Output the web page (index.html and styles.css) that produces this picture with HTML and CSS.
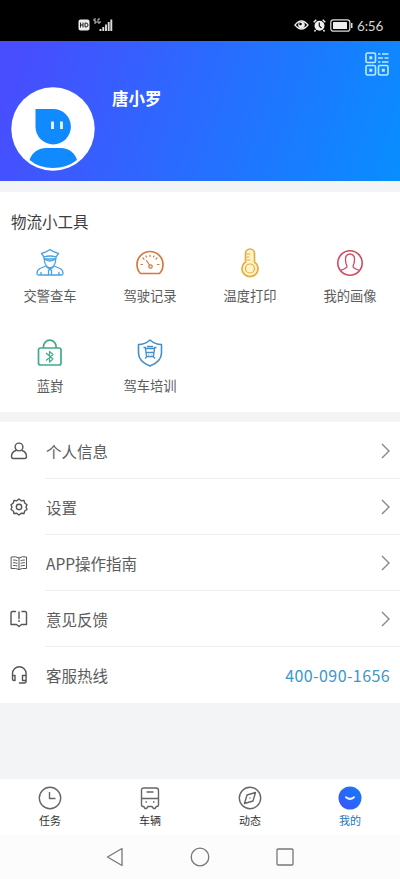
FILE: index.html
```html
<!DOCTYPE html>
<html lang="zh-CN">
<head>
<meta charset="utf-8">
<meta name="viewport" content="width=device-width">
<title>我的</title>
<link rel="stylesheet" href="styles.css">
</head>
<body>
<header class="status">
  <div class="status-left">
    <svg width="12" height="12" viewBox="0 0 12 12"><rect x=".5" y=".5" width="11" height="11" rx="2" fill="#eee"/><path d="M2.500 3.500v5M5 3.500v5M2.500 6H5M7 4h1q2 0 2 2t-2 2H7z" stroke="#222" fill="none"/></svg>
    <svg width="20" height="14" viewBox="0 0 20 14"><path d="M3 1H1v2h2v2H1M7 1H5v4h2V3" stroke="#ddd" stroke-width=".9" fill="none"/><path d="M7.500 11v2M10.300 9v4M13 6.500V13M15.700 4v9M18.300 1.500V13" stroke="#ddd" stroke-width="1.900"/></svg>
  </div>
  <div class="status-right">
    <svg width="15" height="12" viewBox="0 0 15 12"><path d="M1 6Q7.500-2 14 6Q7.500 14 1 6z" fill="none" stroke="#eee" stroke-width="1.300"/><circle cx="7.500" cy="6" r="3.300" fill="#eee"/><circle cx="6.500" cy="5" r="1.300" fill="#000"/></svg>
    <svg width="13" height="13" viewBox="0 0 13 13"><circle cx="6.500" cy="6.700" r="5" fill="#eee"/><path d="M.7 3.300 3.300.8M9.700.8l2.600 2.500M2.500 11l-1 1.500M10.500 11l1 1.500" stroke="#eee" stroke-width="1.400"/><path d="M6.300 3.500V7l2.200 2" fill="none" stroke="#111" stroke-width="1.200"/></svg>
    <svg width="23" height="13" viewBox="0 0 23 13"><rect x=".8" y=".8" width="19" height="11.400" rx="2.500" fill="none" stroke="#ddd" stroke-width="1.200"/><rect x="3" y="3" width="14" height="7" rx=".5" fill="#eee"/><path d="M21.700 4v5" stroke="#ddd" stroke-width="1.600"/></svg>
    <span class="time">6:56</span>
  </div>
</header>

<section class="profile">
  <svg class="avatar" viewBox="0 0 84 84"><circle cx="42" cy="42" r="41.700" fill="#fff"/><path d="M24.500 22H42a17.700 17.700 0 1 1-17.500 17.700z" fill="#118aff"/><path d="M18.500 73C21 65 28 61 35 61h15c8 0 14 5 16 12q-10 8-24 8t-23.500-8z" fill="#118aff"/><path d="M41.500 34.500v7.500M50.500 34.500v7.500" stroke="#e8faff" stroke-width="2.800"/></svg>
  <h1 class="name">唐小罗</h1>
  <svg class="qr" viewBox="0 0 24 24" fill="none" stroke="#b8edff" stroke-width="1.600"><rect x="1" y="1" width="9.500" height="9.500" rx="1.500"/><rect x="1" y="13.500" width="9.500" height="9.500" rx="1.500"/><rect x="13.500" y="13.500" width="9.500" height="9.500" rx="1.500"/><path d="M4.300 5.700h3M4.300 18.200h3M16.800 18.200h3" stroke-width="3"/><path d="M13 2h2.500M17 2h6.500M13 6h5M19.500 6h4M13 10h2.500M17 10h6.500"/></svg>
</section>

<section class="tools">
  <h2 class="tools-title">物流小工具</h2>
  <div class="tools-grid">
    <div class="tool">
      <svg class="tool-icon" viewBox="0 0 30 30" fill="none" stroke="#4aa3dc" stroke-width="1.300" stroke-linejoin="round"><path d="M9 9 6.500 5.500Q12 4 15 1.500q3 2.500 8.500 4L21 9v2H9zM9 9q6-2 12 0M9.500 11v2.500q1 5.500 5.500 6.500 4.500-1 5.500-6.500V11q-5.500 4-11 0M11 18l-6 2.500Q2 22 2 25.500 2 27 3.500 27h23q1.500 0 1.500-1.500 0-3.500-3-5L19 18M11 18l4 4 4-4M13.500 22v5M16.500 22v5M6 24v3M24 24v3"/></svg>
      <span>交警查车</span>
    </div>
    <div class="tool">
      <svg class="tool-icon" viewBox="0 0 30 30" fill="none" stroke="#d9763f" stroke-width="1.700" stroke-linecap="round" stroke-linejoin="round"><path d="M5.500 25.500Q2 22 2 16.500a13 13 0 0 1 26 0q0 5.500-3.500 9z"/><path d="M6 16.500h1.500M22.500 16.500H24M8 10l1 1M15 7v1.500M22 10l-1 1M11 8l.5 1M19 8l-.5 1M11.500 12.500l3 4.500" stroke-width="1.200"/><circle cx="15.500" cy="18.500" r="1.700" stroke-width="1.300"/></svg>
      <span>驾驶记录</span>
    </div>
    <div class="tool">
      <svg class="tool-icon" viewBox="0 0 30 30" fill="#fff3c9" stroke="#e4ae46" stroke-width="1.700" stroke-linecap="round"><path d="M10.500 14V5.500a4.500 4.500 0 0 1 9 0V14a8 8 0 1 1-9 0z"/><circle cx="15" cy="20.500" r="4.500" stroke-width="1.200"/><path d="M12 6h3M12 9h2M12 12h3" stroke-width="1.100"/></svg>
      <span>温度打印</span>
    </div>
    <div class="tool">
      <svg class="tool-icon" viewBox="0 0 30 30" fill="none" stroke="#cf4b61" stroke-width="1.600"><circle cx="15" cy="15" r="12.200"/><path d="M5 22.500q5-1.500 6.500-3 1-1-.5-4Q9 6 15 6t4 9.500q-1.500 3-.5 4 1.500 1.500 6.500 3" stroke-width="1.300"/></svg>
      <span>我的画像</span>
    </div>
    <div class="tool">
      <svg class="tool-icon" viewBox="0 0 30 30" fill="none" stroke="#42aa8b" stroke-width="1.700" stroke-linejoin="round"><rect x="3.500" y="10" width="22.500" height="17" rx="2"/><path d="M8.500 10V8.500a6.300 6.300 0 0 1 12.600 0V10"/><path d="m11 15 7 6-3.500 3V13.500l3.500 3-7 6" stroke-width="1.200"/></svg>
      <span>蓝崶</span>
    </div>
    <div class="tool">
      <svg class="tool-icon" viewBox="0 0 30 30" fill="none" stroke="#438fca" stroke-width="1.600" stroke-linejoin="round"><path d="M15 2q5 4.500 11.500 4.500V15q0 8.500-11.500 13Q3.500 23.500 3.500 15V6.500Q10 6.500 15 2z"/><path d="M10.500 10.500h9l-1 8h-7zM10.500 14.500h9M12 8.500h6M8.500 9.500h2v3M21.500 9.500h-2v3M12 18.500l-2 2M18 18.500l2 2M13 16.700h.5M16.700 16.700h.5" stroke-width="1.300"/></svg>
      <span>驾车培训</span>
    </div>
  </div>
</section>

<main class="menu">
  <div class="row">
    <svg class="row-icon" viewBox="0 0 18 18"><circle cx="9" cy="5" r="3.900"/><path d="M6 8.500Q1.500 10 1.500 14.500q0 2 2 2h11q2 0 2-2 0-4.500-4.500-6"/></svg>
    <div class="row-body"><span>个人信息</span><svg class="chevron" viewBox="0 0 9 16"><path d="m1 1 7 7-7 7"/></svg></div>
  </div>
  <div class="row">
    <svg class="row-icon" viewBox="0 0 18 18"><path d="m9 1 2.200 1.700 2.800-.3.700 2.600L17 6.700 16 9l1 2.500-2.300 1.500-.7 2.500-2.800-.2L9 17l-2.200-1.700-2.800.2-.7-2.500L1 11.500 2 9 1 6.700 3.300 5 4 2.400l2.800.3z"/><circle cx="9" cy="9" r="2.700"/></svg>
    <div class="row-body"><span>设置</span><svg class="chevron" viewBox="0 0 9 16"><path d="m1 1 7 7-7 7"/></svg></div>
  </div>
  <div class="row">
    <svg class="row-icon thin" viewBox="0 0 18 18"><path d="M1.500 3Q6 2 9 4q3-2 7.500-1v11.500Q12 14 9 15.500 6 14 1.500 14.500zM9 4v11M3.500 6q2 0 3.500.5M3.500 8.700q2 0 3.500.5M3.500 11.400q2 0 3.500.5M14.500 6q-2 0-3.500.5M14.500 8.700q-2 0-3.500.5M14.500 11.400q-2 0-3.500.5"/></svg>
    <div class="row-body"><span>APP操作指南</span><svg class="chevron" viewBox="0 0 9 16"><path d="m1 1 7 7-7 7"/></svg></div>
  </div>
  <div class="row">
    <svg class="row-icon" viewBox="0 0 18 18"><path d="M5.500 1.500h-3Q1 1.500 1 3v11.500h5.500L9 16.500l2.500-2h5V3q0-1.500-1.500-1.500h-3M9 2v6.500M9 10.500v1"/></svg>
    <div class="row-body"><span>意见反馈</span><svg class="chevron" viewBox="0 0 9 16"><path d="m1 1 7 7-7 7"/></svg></div>
  </div>
  <div class="row">
    <svg class="row-icon" viewBox="0 0 18 18"><path d="M2.500 10V7.500a6.800 6.800 0 0 1 13.600 0v7.500q0 2-2 2H9.500M2.500 9.500H5v5H4q-1.500 0-1.500-1.500zM16 9.500h-3.500v5H16"/></svg>
    <div class="row-body"><span>客服热线</span><span class="phone">400-090-1656</span></div>
  </div>
</main>

<nav class="tabs">
  <div class="tab">
    <svg class="tab-icon" viewBox="0 0 24 24"><circle cx="12" cy="12" r="10.700"/><path d="M11.500 6v6.500h6"/></svg>
    <span>任务</span>
  </div>
  <div class="tab">
    <svg class="tab-icon" viewBox="0 0 24 24"><path d="M6 2h12q2.500 0 2.500 2.500V19q0 1.500-1.500 1.500h-.7L17 22.500h-1.500L14 20.500h-4l-1.500 2H7l-1.300-2H5q-1.500 0-1.500-1.500V4.500Q3.500 2 6 2zM3.500 12.500h17M8.500 6h7M7.500 16h1.500M15 16h1.500"/></svg>
    <span>车辆</span>
  </div>
  <div class="tab">
    <svg class="tab-icon" viewBox="0 0 24 24"><circle cx="12" cy="12" r="10.700"/><path d="M17.500 6.500 15 15l-8.500 2.500L9 9zM11.500 12h1"/></svg>
    <span>动态</span>
  </div>
  <div class="tab active">
    <svg class="tab-icon" viewBox="0 0 24 24"><defs><linearGradient id="face" x1="0" y1="1" x2="1" y2="0"><stop offset="0" stop-color="#3b53fb"/><stop offset="1" stop-color="#147bf8"/></linearGradient></defs><circle cx="12" cy="12" r="11.500" fill="url(#face)" stroke="none"/><path d="M8 11.200q4 3.300 8 0" stroke="#e6f3ff" stroke-width="2" stroke-linecap="round"/></svg>
    <span>我的</span>
  </div>
</nav>

<footer class="system">
  <svg width="18" height="20" viewBox="0 0 18 20"><path d="M16 1.500v17L1.500 10z"/></svg>
  <svg width="20" height="20" viewBox="0 0 20 20"><circle cx="10" cy="10" r="8.800"/></svg>
  <svg width="18" height="20" viewBox="0 0 18 20"><rect x="1" y="2" width="16" height="16" rx="1"/></svg>
</footer>
</body>
</html>
```

FILE: styles.css
```css
* { box-sizing: border-box; }
body {
  margin: 0;
  width: 400px;
  height: 879px;
  overflow: hidden;
  display: flex;
  flex-direction: column;
  background: #f2f4f6;
  color: #5c5c5c;
  font-family: "Noto Sans CJK SC", sans-serif;
}
svg { display: block; flex: none; }
h1, h2 { margin: 0; }

.status {
  height: 41px;
  flex: none;
  background: #000;
  display: flex;
  justify-content: space-between;
  padding: 10px 17px 0 78px;
}
.status-left, .status-right { display: flex; align-items: center; height: 30px; }
.status-left { gap: 3px; }
.status-right { gap: 4px; padding-right: 1px; }
.time { color: #d5d5d5; font: 13.500px/20px Lato, sans-serif; width: 25px; white-space: nowrap; letter-spacing: -.2px; padding-top: 1px; }

.profile {
  height: 140px;
  flex: none;
  display: flex;
  align-items: flex-start;
  padding: 11px 11px 0;
  background: linear-gradient(110deg, #484dfe 5%, #286dff 52%, #088eff 100%);
}
.avatar { width: 84px; height: 84px; margin-top: 35px; }
.name { flex: 1; margin: 34px 0 0 17px; color: #fff; font-size: 16.500px; line-height: 24px; font-weight: 700; }
.qr { width: 24px; height: 24px; }

.tools { height: 220px; flex: none; margin-top: 11px; padding-top: 17px; background: #fff; }
.tools-title { padding-left: 11px; font-size: 15.500px; line-height: 24px; font-weight: 400; color: #3c3c3c; }
.tools-grid { display: grid; grid-template-columns: repeat(4, 100px); grid-auto-rows: 90px; padding-top: 15px; }
.tool { display: flex; flex-direction: column; align-items: center; font-size: 13.300px; line-height: 20px; }
.tool-icon { width: 30px; height: 30px; margin-bottom: 8px; }

.menu { margin-top: 10px; height: 281px; flex: none; padding: 1px 0 0 10px; background: #fff; display: grid; grid-template-rows: repeat(5, 1fr); }
.row { display: flex; align-items: center; }
.row-icon { width: 18px; height: 18px; margin-right: 17px; fill: none; stroke: #555; stroke-width: 1.400; stroke-linejoin: round; stroke-linecap: round; }
.row-icon.thin { stroke-width: 1; }
.row-body { flex: 1; height: 100%; display: flex; align-items: center; justify-content: space-between; padding: 0 10px 0 1px; border-bottom: 1px solid #eee; font-size: 15.500px; }
.row:last-child .row-body { border-bottom: 0; }
.chevron { width: 9px; height: 16px; fill: none; stroke: #888; stroke-width: 1.400; }
.phone { color: #3c96cb; font-size: 16px; letter-spacing: .4px; }

.tabs { height: 56px; flex: none; margin-top: auto; background: #fff; display: grid; grid-template-columns: repeat(4, 1fr); }
.tab { display: flex; flex-direction: column; align-items: center; padding-top: 7px; font-size: 11px; line-height: 16px; color: #333; }
.tab-icon { width: 24px; height: 24px; margin-bottom: 2px; fill: none; stroke: #666; stroke-width: 1.400; stroke-linejoin: round; }
.tab.active { color: #2375b9; }

.system { height: 44px; flex: none; background: #fcfcfc; display: flex; justify-content: center; align-items: center; gap: 66px; }
.system svg { fill: none; stroke: #777; stroke-width: 1.300; stroke-linejoin: round; }
```
